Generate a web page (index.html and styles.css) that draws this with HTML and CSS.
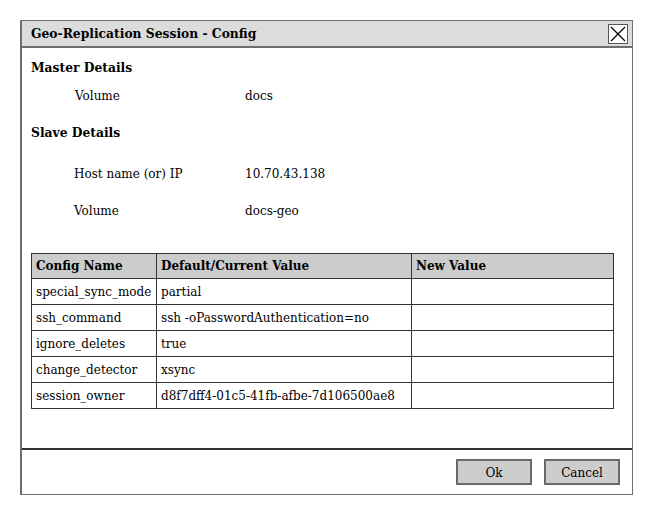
FILE: index.html
```html
<!DOCTYPE html>
<html>
<head>
<meta charset="utf-8">
<link rel="stylesheet" href="styles.css">
</head>
<body>
<div class="dialog">
  <div class="titlebar">
    <span class="title">Geo-Replication Session - Config</span>
    <span class="close"><svg width="18" height="18" viewBox="0 0 18 18"><path d="M2 2L16 16M16 2L2 16" stroke="#000" stroke-width="1.2" fill="none"/></svg></span>
  </div>
  <div class="content">
    <div class="section-title first">Master Details</div>
    <div class="kv master-vol"><span class="k">Volume</span><span class="v">docs</span></div>
    <div class="section-title second">Slave Details</div>
    <div class="kv host"><span class="k">Host name (or) IP</span><span class="v">10.70.43.138</span></div>
    <div class="kv slave-vol"><span class="k">Volume</span><span class="v">docs-geo</span></div>
    <table class="cfg">
      <colgroup><col class="c1"><col class="c2"><col class="c3"></colgroup>
      <tr><th>Config Name</th><th>Default/Current Value</th><th>New Value</th></tr>
      <tr><td>special_sync_mode</td><td>partial</td><td></td></tr>
      <tr><td>ssh_command</td><td>ssh -oPasswordAuthentication=no</td><td></td></tr>
      <tr><td>ignore_deletes</td><td>true</td><td></td></tr>
      <tr><td>change_detector</td><td>xsync</td><td></td></tr>
      <tr><td>session_owner</td><td>d8f7dff4-01c5-41fb-afbe-7d106500ae8</td><td></td></tr>
    </table>
  </div>
  <div class="footer">
    <button class="btn">Ok</button>
    <button class="btn">Cancel</button>
  </div>
</div>
</body>
</html>
```
FILE: styles.css
```css
html, body { margin: 0; padding: 0; background: #fff; }
body { font-family: "DejaVu Serif", serif; font-size: 12px; color: #000; }
.dialog {
  margin: 20px 0 0 20px;
  width: 613px;
  height: 475px;
  box-sizing: border-box;
  border: 2px solid #6e6e6e;
  border-width: 1px 1px 1px 2px;
  display: flex;
  flex-direction: column;
}
.titlebar {
  height: 25px;
  background: #dcdcdc;
  border-bottom: 2px solid #6e6e6e;
  display: flex;
  align-items: center;
  justify-content: space-between;
  padding: 0 4px 0 9px;
}
.title { font-weight: bold; font-size: 12.3px; }
.close {
  width: 18px; height: 18px;
  border: 1px solid #555;
  background: #fff;
  display: flex;
}
.content { flex: 1; padding: 0 0 0 9px; }
.section-title { font-weight: bold; font-size: 12.3px; height: 20px; line-height: 20px; }
.section-title.first { margin-top: 10px; }
.section-title.second { margin-top: 18px; }
.kv { display: flex; height: 18px; line-height: 18px; }
.kv .k { width: 171px; padding-left: 43px; }
.master-vol { margin-top: 9px; }
.master-vol .k { padding-left: 44px; width: 170px; }
.host { margin-top: 22px; }
.slave-vol { margin-top: 19px; }
.cfg {
  margin-top: 33px;
  border-collapse: collapse;
  table-layout: fixed;
  width: 582px;
  border: 1px solid #222;
}
.cfg .c1 { width: 125px; }
.cfg .c2 { width: 255px; }
.cfg .c3 { width: 202px; }
.cfg th, .cfg td {
  border: 1px solid #333;
  height: 25px;
  padding: 0 4px;
  text-align: left;
  white-space: nowrap;
  overflow: hidden;
}
.cfg th { background: #cccccc; font-weight: bold; height: 24px; }
.footer {
  height: 44px;
  border-top: 2px solid #333;
  display: flex;
  justify-content: flex-end;
  align-items: center;
  gap: 12px;
  padding: 0 12px 0 0;
}
.btn {
  width: 76px; height: 26px;
  background: #cdcdcd;
  border: 2px solid #6a6a6a;
  font-family: "DejaVu Serif", serif;
  font-size: 12px;
  color: #000;
  padding: 1px 0 0;
}
```
